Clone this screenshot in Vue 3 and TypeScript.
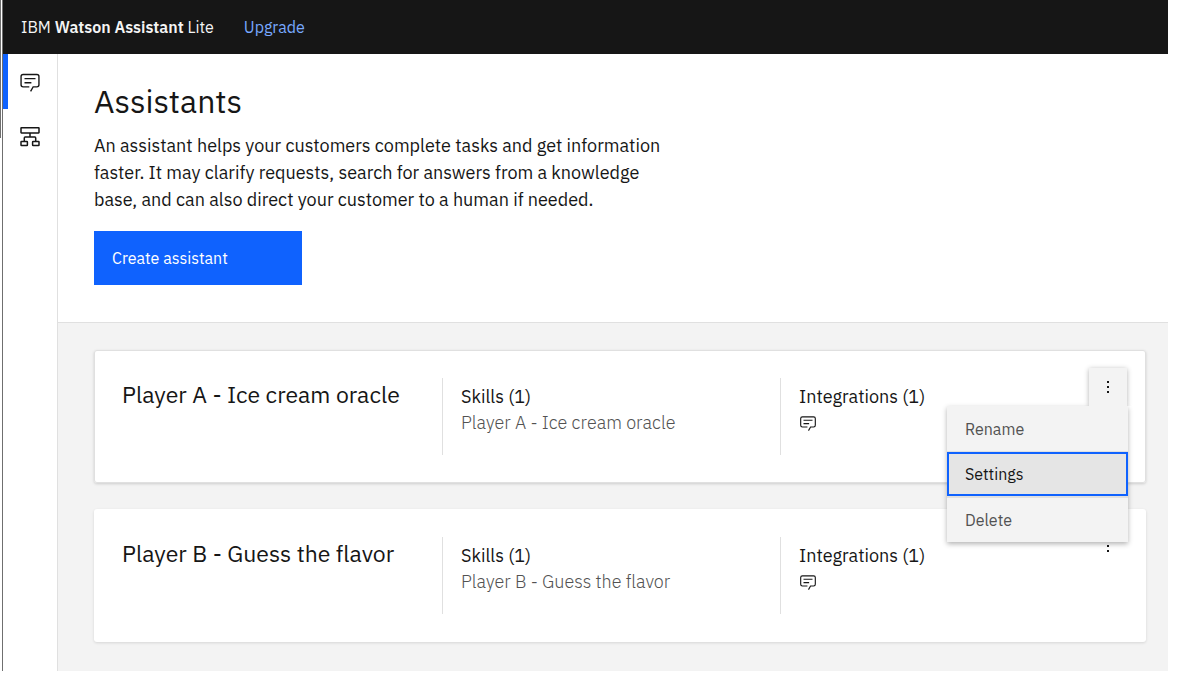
<script setup lang="ts">
import { ref } from 'vue'

interface Assistant {
  id: string
  name: string
  skill: string
}

const assistants: Assistant[] = [
  { id: 'a', name: 'Player A - Ice cream oracle', skill: 'Player A - Ice cream oracle' },
  { id: 'b', name: 'Player B - Guess the flavor', skill: 'Player B - Guess the flavor' },
]

const actions: string[] = ['Rename', 'Settings', 'Delete']
const openMenu = ref<string | null>('a')
const current = ref<string>('Settings')

function toggle(id: string): void {
  openMenu.value = openMenu.value === id ? null : id
}
</script>

<template>
  <div class="window">
    <div class="edge" aria-hidden="true"></div>
    <div class="app">
      <header class="topbar">
        <span class="brand">IBM <b>Watson Assistant</b> Lite</span>
        <a class="upgrade" href="#upgrade">Upgrade</a>
      </header>
      <div class="body">
        <nav class="rail" aria-label="Main">
          <a class="rail-item active" href="#assistants" aria-label="Assistants">
            <svg width="22" height="22" viewBox="0 0 32 32" fill="currentColor">
              <path d="M17.74 30 16 29l4-7h6a2 2 0 0 0 2-2V8a2 2 0 0 0-2-2H6a2 2 0 0 0-2 2v12a2 2 0 0 0 2 2h9v2H6a4 4 0 0 1-4-4V8a4 4 0 0 1 4-4h20a4 4 0 0 1 4 4v12a4 4 0 0 1-4 4h-4.84Z" />
              <path d="M8 10h16v2H8zM8 16h10v2H8z" />
            </svg>
          </a>
          <a class="rail-item" href="#skills" aria-label="Skills">
            <svg width="22" height="22" viewBox="0 0 22 22" fill="none" stroke="currentColor" stroke-width="1.5">
              <rect x="2" y="1.7" width="18" height="5.2" rx="0.4" />
              <path d="M11 6.9v4.1M5.3 15.4v-3.5q0-.9.9-.9h9.6q.9 0 .9.9v3.5" />
              <rect x="2" y="15.4" width="6.4" height="4.1" rx="0.5" />
              <rect x="13.6" y="15.4" width="6.4" height="4.1" rx="0.5" />
            </svg>
          </a>
        </nav>
        <main class="main">
          <section class="intro">
            <h1>Assistants</h1>
            <p>
              An assistant helps your customers complete tasks and get information<br />
              faster. It may clarify requests, search for answers from a knowledge<br />
              base, and can also direct your customer to a human if needed.
            </p>
            <button class="create" type="button">Create assistant</button>
          </section>
          <section class="list">
            <article
              v-for="item in assistants"
              :key="item.id"
              class="card"
              :class="{ selected: openMenu === item.id }"
            >
              <h2>{{ item.name }}</h2>
              <div class="cell">
                <h3>Skills (1)</h3>
                <p>{{ item.skill }}</p>
              </div>
              <div class="cell">
                <h3>Integrations (1)</h3>
                <svg class="chat" width="18" height="18" viewBox="0 0 32 32" fill="currentColor">
                  <path d="M17.74 30 16 29l4-7h6a2 2 0 0 0 2-2V8a2 2 0 0 0-2-2H6a2 2 0 0 0-2 2v12a2 2 0 0 0 2 2h9v2H6a4 4 0 0 1-4-4V8a4 4 0 0 1 4-4h20a4 4 0 0 1 4 4v12a4 4 0 0 1-4 4h-4.84Z" />
                  <path d="M8 10h16v2H8zM8 16h10v2H8z" />
                </svg>
              </div>
              <div class="overflow">
                <button
                  class="dots"
                  type="button"
                  aria-label="Options"
                  :aria-expanded="openMenu === item.id"
                  @click="toggle(item.id)"
                >
                  <svg width="18" height="18" viewBox="0 0 18 18" fill="currentColor">
                    <path d="M8 3h2v2H8zM8 8h2v2H8zM8 13h2v2H8z" />
                  </svg>
                </button>
                <div v-if="openMenu === item.id" class="menu" role="menu">
                  <button
                    v-for="action in actions"
                    :key="action"
                    type="button"
                    role="menuitem"
                    :class="{ current: action === current }"
                    @click="current = action"
                  >
                    {{ action }}
                  </button>
                </div>
              </div>
            </article>
          </section>
        </main>
      </div>
    </div>
  </div>
</template>

<style>
body {
  background: #fff;
}
</style>

<style scoped>
* {
  box-sizing: border-box;
}

.window {
  display: flex;
  min-height: 100vh;
  padding: 0 16px 13px 0;
  font-family: "IBM Plex Sans", "Noto Sans", sans-serif;
  color: #161616;
}

.edge {
  width: 2px;
  height: 138px;
  border-left: 1px solid #6f6f6f;
}

.app {
  display: flex;
  flex: 1;
  flex-direction: column;
  min-width: 0;
}

.topbar {
  display: flex;
  align-items: center;
  gap: 30px;
  height: 54px;
  padding-left: 18px;
  border-left: 1px solid #6f6f6f;
  background: #161616;
  color: #f4f4f4;
  font-size: 16px;
}

.brand b {
  font-weight: 600;
}

.upgrade {
  color: #78a9ff;
  text-decoration: none;
}

.body {
  display: flex;
  flex: 1;
  border-left: 1px solid #6f6f6f;
}

.rail {
  flex: none;
  width: 55px;
  border-right: 1px solid #e0e0e0;
}

.rail-item {
  display: flex;
  align-items: center;
  justify-content: center;
  height: 55px;
  color: #161616;
}

.rail-item.active {
  border-left: 5px solid #0f62fe;
  padding-right: 5px;
}

.main {
  display: flex;
  flex: 1;
  flex-direction: column;
  min-width: 0;
}

.intro {
  padding: 26px 36px 37px;
  border-bottom: 1px solid #e0e0e0;
}

h1,
h2,
h3,
p {
  margin: 0;
  font-weight: 400;
}

h1 {
  font-size: 32px;
  line-height: 42px;
}

.intro p {
  margin: 10px 0 18px;
  font-size: 18px;
  line-height: 27px;
  white-space: nowrap;
}

button {
  border: 0;
  font: inherit;
  text-align: left;
  cursor: pointer;
}

.create {
  display: block;
  width: 208px;
  height: 54px;
  padding: 0 18px;
  background: #0f62fe;
  color: #fff;
  font-size: 16px;
}

.list {
  display: flex;
  flex: 1;
  flex-direction: column;
  gap: 26px;
  padding: 27px 22px 28px 36px;
  background: #f3f3f3;
}

.card {
  position: relative;
  display: grid;
  grid-template-columns: 320px 338px 1fr;
  min-height: 133px;
  padding: 28px 0 28px 28px;
  border-radius: 3px;
  background: #fff;
  box-shadow: 0 1px 3px rgba(0, 0, 0, 0.12);
}

.card.selected {
  box-shadow: inset 0 0 0 1px #e0e0e0, 0 1px 3px rgba(0, 0, 0, 0.16);
}

h2 {
  font-size: 23px;
  line-height: 32px;
}

.cell {
  padding: 6px 0 0 18px;
  border-left: 1px solid #e0e0e0;
}

h3,
.cell p {
  font-size: 18px;
  line-height: 26px;
}

.cell p {
  color: #525252;
  font-weight: 300;
}

.chat {
  display: block;
  margin-top: 4px;
}

.overflow {
  position: absolute;
  top: 18px;
  right: 18px;
}

.dots {
  position: relative;
  display: flex;
  align-items: center;
  justify-content: center;
  width: 38px;
  height: 38px;
  margin-right: 1px;
  padding: 0;
  background: transparent;
  color: #161616;
}

.selected .overflow {
  z-index: 1;
}

.selected .dots {
  z-index: 1;
  background: #f3f3f3;
  box-shadow: 0 1px 5px rgba(0, 0, 0, 0.3);
  clip-path: inset(-6px -6px 0 -6px);
}

.menu {
  position: absolute;
  top: 38px;
  right: 0;
  width: 181px;
  background: #f3f3f3;
  box-shadow: 0 2px 5px rgba(0, 0, 0, 0.3);
}

.menu button {
  display: block;
  width: 100%;
  height: 46px;
  padding: 0 18px;
  border-bottom: 1px solid #e0e0e0;
  background: #f3f3f3;
  color: #525252;
  font-size: 16px;
}

.menu button:last-child {
  height: 44px;
  border-bottom: 0;
}

.menu button.current {
  border-bottom: 2px solid #e0e0e0;
  background: #e5e5e5;
  box-shadow: inset 0 0 0 2px #0f62fe;
  color: #161616;
}
</style>
